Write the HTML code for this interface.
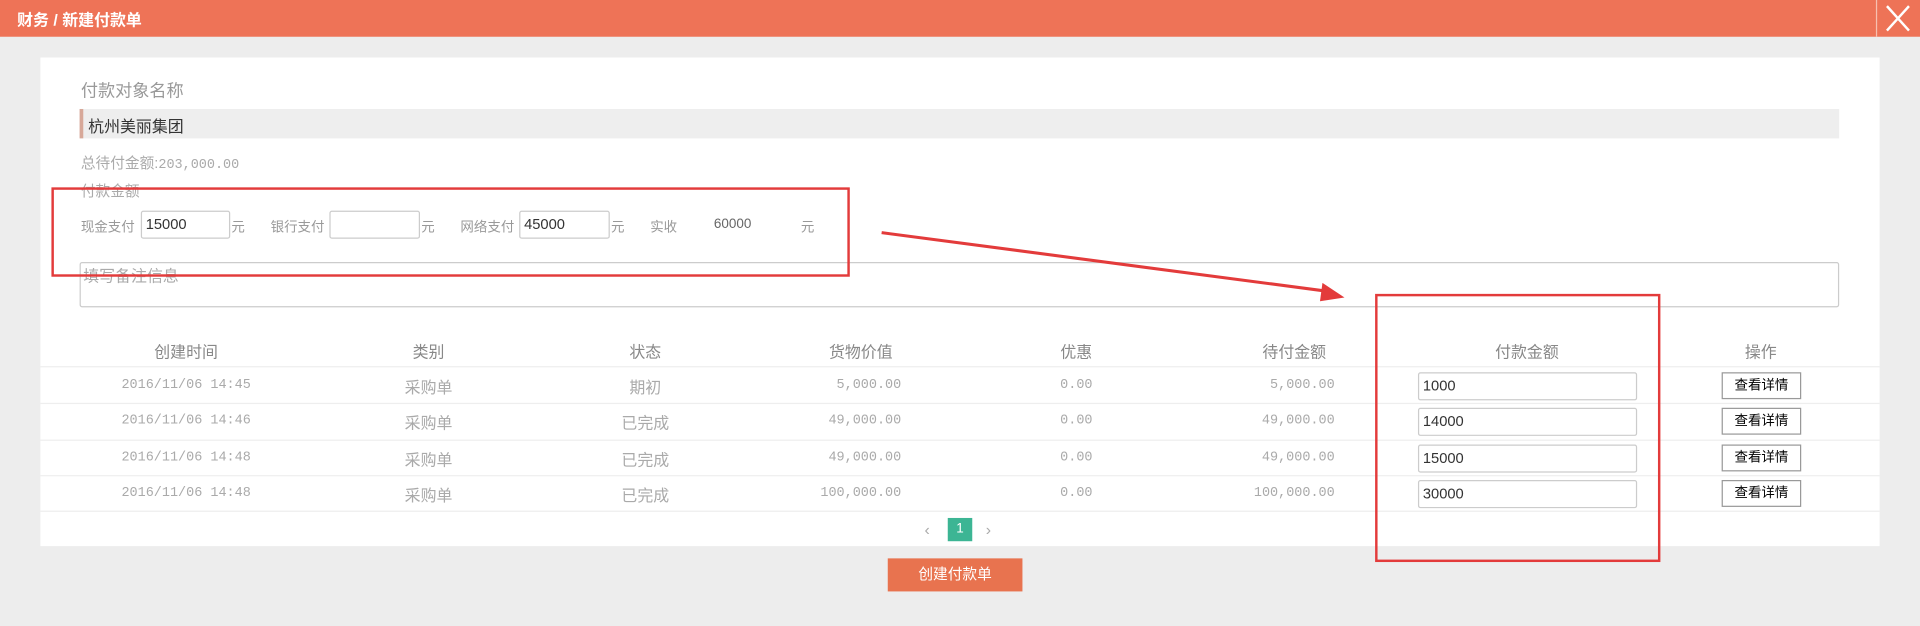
<!DOCTYPE html>
<html><head><meta charset="utf-8"><style>
html,body{margin:0;padding:0;width:1920px;height:626px;overflow:hidden;background:#ededed;}
#w{position:absolute;left:0;top:0;width:1568px;height:511px;transform:scale(1.22449);transform-origin:0 0;font-family:"Liberation Sans","Noto Sans CJK SC",sans-serif;}
.a{position:absolute;white-space:nowrap;}
.g{color:#999;}
.inp{position:absolute;background:#fff;border:1px solid #ccc;border-radius:2px;box-sizing:border-box;font-size:12px;color:#333;padding-left:3px;}
.c{position:absolute;text-align:center;font-size:12px;color:#aaa;}
.r{position:absolute;text-align:right;font-size:12px;color:#aaa;}
.m{font-family:"Liberation Mono","Noto Sans CJK SC",monospace;font-size:11px;}
.btn{position:absolute;left:1406px;width:65px;height:22px;border:1px solid #999;box-sizing:border-box;background:#fff;font-size:11px;color:#000;text-align:center;line-height:20px;}
.line{position:absolute;left:33px;width:1502px;height:1px;background:#eee;}
</style></head><body><div id="w">
<div class="a" style="left:0;top:0;width:1568px;height:30px;background:#ee7357;"></div>
<div class="a" style="left:14px;top:6px;color:#fff;font-weight:bold;font-size:13px;">财务 / 新建付款单</div>
<div class="a" style="left:1532px;top:0;width:1px;height:30px;background:#f7c0b0;"></div>
<svg class="a" style="left:1538px;top:4px" width="24" height="22"><path d="M3 1L21 21M21 1L3 21" stroke="#fff" stroke-width="2"/></svg>
<div class="a" style="left:33px;top:47px;width:1502px;height:399px;background:#fff;"></div>
<div class="a g" style="left:66px;top:64px;font-size:14px;">付款对象名称</div>
<div class="a" style="left:65px;top:89px;width:1437px;height:24px;background:#eee;border-left:3px solid #d7a899;box-sizing:border-box;"></div>
<div class="a" style="left:72px;top:93px;font-size:13px;color:#333;">杭州美丽集团</div>
<div class="a" style="left:66px;top:124px;font-size:12px;color:#aaa;">总待付金额:<span class="m">203,000.00</span></div>
<div class="a" style="left:66px;top:147px;font-size:12px;color:#aaa;">付款金额</div>
<div class="a g" style="left:66px;top:177px;font-size:11px;">现金支付</div>
<div class="inp" style="left:115px;top:172px;width:73px;height:23px;line-height:21px;">15000</div>
<div class="a g" style="left:189px;top:177px;font-size:11px;">元</div>
<div class="a g" style="left:221px;top:177px;font-size:11px;">银行支付</div>
<div class="inp" style="left:269px;top:172px;width:74px;height:23px;"></div>
<div class="a g" style="left:344px;top:177px;font-size:11px;">元</div>
<div class="a g" style="left:376px;top:177px;font-size:11px;">网络支付</div>
<div class="inp" style="left:424px;top:172px;width:74px;height:23px;line-height:21px;">45000</div>
<div class="a g" style="left:499px;top:177px;font-size:11px;">元</div>
<div class="a g" style="left:531px;top:177px;font-size:11px;">实收</div>
<div class="a" style="left:583px;top:177px;font-size:11px;color:#666;">60000</div>
<div class="a g" style="left:654px;top:177px;font-size:11px;">元</div>
<div class="inp" style="left:65px;top:214px;width:1437px;height:37px;"></div>
<div class="a" style="left:68px;top:215px;font-size:13px;color:#aaa;">填写备注信息</div>
<div class="a" style="left:42px;top:153px;width:652px;height:73px;border:2px solid #e33b3b;box-sizing:border-box;"></div>
<svg class="a" style="left:0;top:0" width="1568" height="511"><path d="M720 190L1085 238" stroke="#e33b3b" stroke-width="2.5"/><path d="M1098 243L1080 231L1078 246Z" fill="#e33b3b"/></svg>
<div class="c" style="left:52px;width:200px;top:277px;font-size:13px;color:#888;">创建时间</div>
<div class="c" style="left:250px;width:200px;top:277px;font-size:13px;color:#888;">类别</div>
<div class="c" style="left:427px;width:200px;top:277px;font-size:13px;color:#888;">状态</div>
<div class="c" style="left:603px;width:200px;top:277px;font-size:13px;color:#888;">货物价值</div>
<div class="c" style="left:779px;width:200px;top:277px;font-size:13px;color:#888;">优惠</div>
<div class="c" style="left:957px;width:200px;top:277px;font-size:13px;color:#888;">待付金额</div>
<div class="c" style="left:1147px;width:200px;top:277px;font-size:13px;color:#888;">付款金额</div>
<div class="c" style="left:1338px;width:200px;top:277px;font-size:13px;color:#888;">操作</div>
<div class="line" style="top:299px"></div>
<div class="line" style="top:329px"></div>
<div class="line" style="top:359px"></div>
<div class="line" style="top:388px"></div>
<div class="line" style="top:417px"></div>

<div class="c m" style="left:52px;width:200px;top:309px;">2016/11/06 14:45</div>
<div class="c" style="left:250px;width:200px;top:306px;font-size:13px;">采购单</div>
<div class="c" style="left:427px;width:200px;top:306px;font-size:13px;">期初</div>
<div class="r m" style="left:536px;width:200px;top:309px;">5,000.00</div>
<div class="c m" style="left:779px;width:200px;top:309px;">0.00</div>
<div class="r m" style="left:890px;width:200px;top:309px;">5,000.00</div>
<div class="inp" style="left:1158px;top:304px;width:179px;height:23px;line-height:21px;">1000</div>
<div class="btn" style="top:304px;">查看详情</div>

<div class="c m" style="left:52px;width:200px;top:338px;">2016/11/06 14:46</div>
<div class="c" style="left:250px;width:200px;top:335px;font-size:13px;">采购单</div>
<div class="c" style="left:427px;width:200px;top:335px;font-size:13px;">已完成</div>
<div class="r m" style="left:536px;width:200px;top:338px;">49,000.00</div>
<div class="c m" style="left:779px;width:200px;top:338px;">0.00</div>
<div class="r m" style="left:890px;width:200px;top:338px;">49,000.00</div>
<div class="inp" style="left:1158px;top:333px;width:179px;height:23px;line-height:21px;">14000</div>
<div class="btn" style="top:333px;">查看详情</div>

<div class="c m" style="left:52px;width:200px;top:368px;">2016/11/06 14:48</div>
<div class="c" style="left:250px;width:200px;top:365px;font-size:13px;">采购单</div>
<div class="c" style="left:427px;width:200px;top:365px;font-size:13px;">已完成</div>
<div class="r m" style="left:536px;width:200px;top:368px;">49,000.00</div>
<div class="c m" style="left:779px;width:200px;top:368px;">0.00</div>
<div class="r m" style="left:890px;width:200px;top:368px;">49,000.00</div>
<div class="inp" style="left:1158px;top:363px;width:179px;height:23px;line-height:21px;">15000</div>
<div class="btn" style="top:363px;">查看详情</div>

<div class="c m" style="left:52px;width:200px;top:397px;">2016/11/06 14:48</div>
<div class="c" style="left:250px;width:200px;top:394px;font-size:13px;">采购单</div>
<div class="c" style="left:427px;width:200px;top:394px;font-size:13px;">已完成</div>
<div class="r m" style="left:536px;width:200px;top:397px;">100,000.00</div>
<div class="c m" style="left:779px;width:200px;top:397px;">0.00</div>
<div class="r m" style="left:890px;width:200px;top:397px;">100,000.00</div>
<div class="inp" style="left:1158px;top:392px;width:179px;height:23px;line-height:21px;">30000</div>
<div class="btn" style="top:392px;">查看详情</div>

<div class="a" style="left:755px;top:425px;font-size:13px;color:#aaa;">‹</div>
<div class="a" style="left:774px;top:423px;width:20px;height:19px;background:#3cb594;color:#fff;font-size:11px;text-align:center;line-height:19px;">1</div>
<div class="a" style="left:805px;top:425px;font-size:13px;color:#aaa;">›</div>
<div class="a" style="left:1123px;top:240px;width:233px;height:219px;border:2px solid #e33b3b;box-sizing:border-box;"></div>
<div class="a" style="left:725px;top:456px;width:110px;height:27px;background:#e8734f;color:#fff;font-size:12px;text-align:center;line-height:27px;">创建付款单</div>
</div></body></html>
